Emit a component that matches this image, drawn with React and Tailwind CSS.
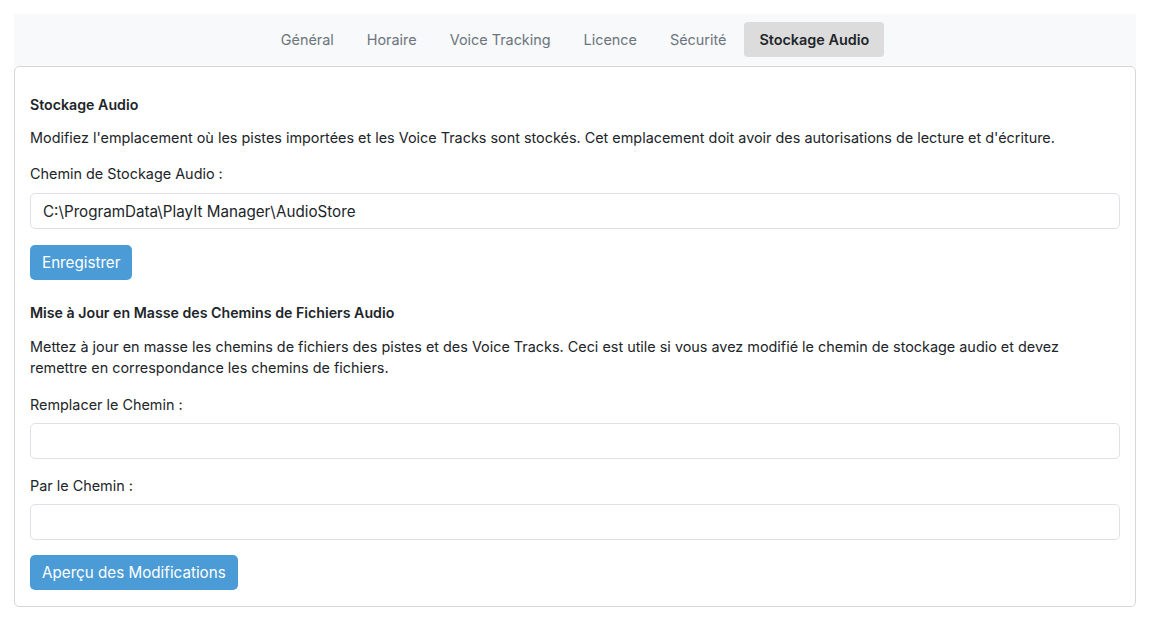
import { useState } from "react";

const tabs = ["Général", "Horaire", "Voice Tracking", "Licence", "Sécurité", "Stockage Audio"];

export default function App() {
  const [active, setActive] = useState("Stockage Audio");
  const [storePath, setStorePath] = useState("C:\\ProgramData\\PlayIt Manager\\AudioStore");
  const [fromPath, setFromPath] = useState("");
  const [toPath, setToPath] = useState("");

  return (
    <div className="min-h-screen bg-white px-[14px] pt-[14px] font-['Inter',sans-serif] text-[14.4px] text-[#212529]">
      {/* Onglets */}
      <div className="flex h-[52px] items-center justify-center gap-[3px] bg-[#f8f9fa]">
        {tabs.map((t) => (
          <button
            key={t}
            onClick={() => setActive(t)}
            className={
              t === active
                ? "mb-[1px] h-[35px] rounded-[4px] bg-[#dcdcdc] px-[15px] text-[14.4px] font-semibold text-[#212529]"
                : "mb-[1px] h-[35px] rounded-[4px] px-[15px] text-[14.4px] text-[#6c757d]"
            }
          >
            {t}
          </button>
        ))}
      </div>

      {/* Carte */}
      <div className="rounded-[5px] border border-[#d7d7d7] px-[15px] pt-[27px] pb-[16px] leading-[21px]">
        <h3 className="text-[14.2px] font-semibold">Stockage Audio</h3>
        <p className="mt-[12px]">
          Modifiez l'emplacement où les pistes importées et les Voice Tracks sont stockés. Cet emplacement doit avoir des autorisations de lecture et d'écriture.
        </p>
        <label className="mt-[15px] block">Chemin de Stockage Audio :</label>
        <input
          value={storePath}
          onChange={(e) => setStorePath(e.target.value)}
          className="mt-[9px] block h-[36px] w-full rounded-[5px] border border-[#dee2e6] px-[12px] text-[15.2px] outline-none"
        />
        <button className="mt-[16px] h-[35px] rounded-[5px] bg-[#4a9bd6] px-[12px] text-[15.2px] text-white">
          Enregistrer
        </button>

        <h3 className="mt-[22px] text-[14.2px] font-semibold">Mise à Jour en Masse des Chemins de Fichiers Audio</h3>
        <p className="mt-[13px]">
          Mettez à jour en masse les chemins de fichiers des pistes et des Voice Tracks. Ceci est utile si vous avez modifié le chemin de stockage audio et devez remettre en correspondance les chemins de fichiers.
        </p>
        <label className="mt-[16px] block">Remplacer le Chemin :</label>
        <input
          value={fromPath}
          onChange={(e) => setFromPath(e.target.value)}
          className="mt-[8px] block h-[36px] w-full rounded-[5px] border border-[#dee2e6] px-[12px] text-[15.2px] outline-none"
        />
        <label className="mt-[16px] block">Par le Chemin :</label>
        <input
          value={toPath}
          onChange={(e) => setToPath(e.target.value)}
          className="mt-[8px] block h-[36px] w-full rounded-[5px] border border-[#dee2e6] px-[12px] text-[15.2px] outline-none"
        />
        <button className="mt-[15px] h-[35px] rounded-[5px] bg-[#4a9bd6] px-[12px] text-[15.2px] text-white">
          Aperçu des Modifications
        </button>
      </div>
    </div>
  );
}
